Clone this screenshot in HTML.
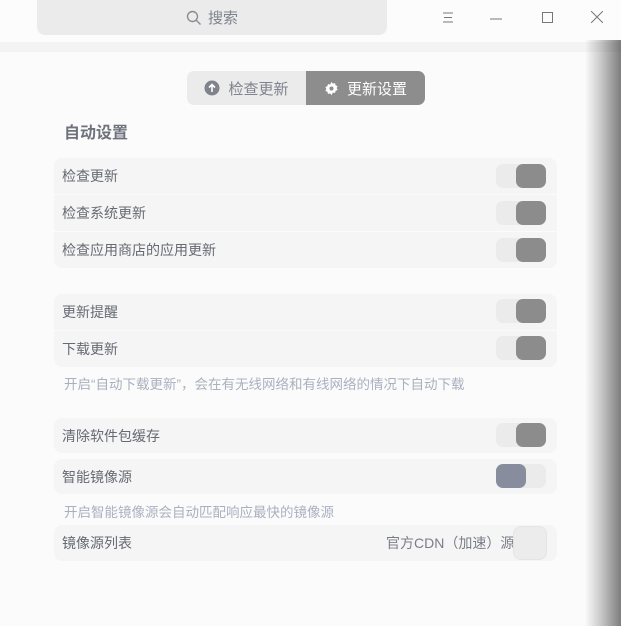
<!DOCTYPE html>
<html><head><meta charset="utf-8"><style>
*{margin:0;padding:0;box-sizing:border-box}
body{width:621px;height:626px;overflow:hidden;background:#fbfbfb;font-family:"Liberation Sans","Noto Sans CJK SC",sans-serif;position:relative}
.top{position:absolute;left:0;top:0;width:621px;height:42px;background:#fcfcfc}
.search{position:absolute;left:37px;top:0;width:350px;height:35px;background:#ebebeb;border-radius:0 0 8px 8px;color:#7f838d;font-size:15px;display:flex;align-items:center;justify-content:center;gap:6px}
.panel{position:absolute;left:0;top:52px;width:621px;height:574px;background:#fbfbfb;border-radius:10px 0 0 0}
.topband{position:absolute;left:0;top:42px;width:621px;height:10px;background:#f3f3f3}
.shadow{position:absolute;right:0;top:40px;width:36px;height:586px;background:linear-gradient(to right,rgba(0,0,0,0),rgba(0,0,0,.18) 40%,rgba(0,0,0,.5) 100%)}
.tabs{position:absolute;left:187px;top:71px;width:238px;height:34px;border-radius:7px;overflow:hidden;display:flex;font-size:15px}
.tab1{width:119px;background:#ebebeb;color:#7f838d;display:flex;align-items:center;justify-content:center;gap:8px}
.tab2{width:119px;background:#8d8d8d;color:#fff;display:flex;align-items:center;justify-content:center;gap:8px}
h2{position:absolute;left:64px;top:119px;font-size:16px;color:#6e727c;font-weight:bold}
.row{position:absolute;left:54px;width:503px;background:#f5f5f5;font-size:14px;color:#666a74;padding-left:8px;display:flex;align-items:center}
.tg{position:absolute;left:442px;width:50px;height:24px;border-radius:7px;background:#ebebeb}
.tg i{position:absolute;top:0;width:30px;height:24px;border-radius:7px;background:#8c8c8c}
.hint{position:absolute;left:64px;font-size:13.5px;color:#a9b1bf}
</style></head><body>
<div class="top"></div>
<div class="search"><svg width="16" height="16" viewBox="0 0 16 16"><circle cx="6.5" cy="6.5" r="5" fill="none" stroke="#8a8d96" stroke-width="1.4"/><path d="M10 10l4.5 4.5" stroke="#8a8d96" stroke-width="1.4"/></svg>搜索</div>
<svg style="position:absolute;left:443px;top:12px" width="10" height="11"><path d="M0 1h10M1 5.5h8M0 10h10" stroke="#777" stroke-width="1"/></svg>
<svg style="position:absolute;left:490px;top:18px" width="12" height="2"><path d="M0 1h12" stroke="#777"/></svg>
<svg style="position:absolute;left:542px;top:12px" width="12" height="12"><rect x=".5" y=".5" width="10" height="10" fill="none" stroke="#777"/></svg>
<svg style="position:absolute;left:591px;top:11px" width="12" height="12"><path d="M0 0l12 12M12 0L0 12" stroke="#777"/></svg>
<div class="topband"></div>
<div class="panel"></div>
<div class="tabs"><div class="tab1"><svg width="16" height="16"><circle cx="8" cy="8" r="7.5" fill="#7f838d"/><path d="M8 12V5M5 7.5L8 4.5l3 3" stroke="#fff" stroke-width="1.6" fill="none"/></svg>检查更新</div><div class="tab2"><svg width="15" height="15" viewBox="0 0 16 16"><path d="M8 1l1.5 1.8 2.3-.6.5 2.3 2.2.9-1 2.1 1 2.1-2.2.9-.5 2.3-2.3-.6L8 15l-1.5-1.8-2.3.6-.5-2.3-2.2-.9 1-2.1-1-2.1 2.2-.9.5-2.3 2.3.6z" fill="#fff"/><circle cx="8" cy="8" r="2.2" fill="#8d8d8d"/></svg>更新设置</div></div>
<h2>自动设置</h2>
<div class="row" style="top:158px;height:36px;border-radius:8px 8px 0 0">检查更新<div class="tg" style="top:6px"><i style="right:0"></i></div></div>
<div class="row" style="top:195px;height:36px">检查系统更新<div class="tg" style="top:6px"><i style="right:0"></i></div></div>
<div class="row" style="top:232px;height:36px;border-radius:0 0 8px 8px">检查应用商店的应用更新<div class="tg" style="top:6px"><i style="right:0"></i></div></div>
<div class="row" style="top:294px;height:36px;border-radius:8px 8px 0 0">更新提醒<div class="tg" style="top:5px"><i style="right:0"></i></div></div>
<div class="row" style="top:331px;height:36px;border-radius:0 0 8px 8px">下载更新<div class="tg" style="top:5px"><i style="right:0"></i></div></div>
<div class="hint" style="top:373px">开启“自动下载更新”，会在有无线网络和有线网络的情况下自动下载</div>
<div class="row" style="top:418px;height:35px;border-radius:8px">清除软件包缓存<div class="tg" style="top:5px"><i style="right:0"></i></div></div>
<div class="row" style="top:459px;height:35px;border-radius:8px">智能镜像源<div class="tg" style="top:5px"><i style="left:0;background:#878d9c"></i></div></div>
<div class="hint" style="top:501px">开启智能镜像源会自动匹配响应最快的镜像源</div>
<div class="row" style="top:525px;height:36px;border-radius:8px">镜像源列表<span style="position:absolute;left:332px;color:#7a7e88">官方CDN（加速）源</span><div style="position:absolute;left:459px;top:1px;width:34px;height:34px;border-radius:8px;background:#ececec;border:1px solid #e4e4e4"></div></div>
<div class="shadow"></div>
</body></html>
